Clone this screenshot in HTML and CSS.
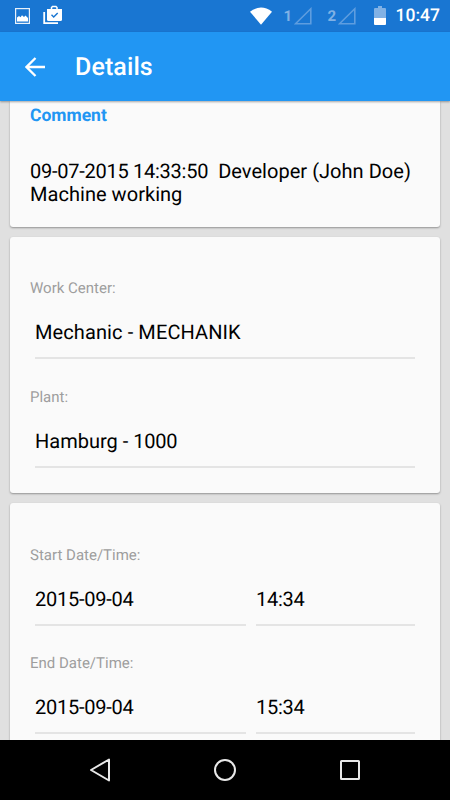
FILE: index.html
```html
<!DOCTYPE html>
<html lang="en">
<head>
<meta charset="utf-8">
<title>Details</title>
<link rel="stylesheet" href="styles.css">
</head>
<body>
<div class="status">
  <svg class="status-left" width="50" height="31" viewBox="0 0 50 31">
    <rect x="0.6" y="8.600" width="13.800" height="14.800" fill="none" stroke="#e8f1fa" stroke-width="1.200"/>
    <path d="M2 21.500V17.500l2-1.500 1.500 1.200 1.500-2 2 1.800 1.500-1.500 2.500 2.500v3.500z" fill="#fff"/>
    <path d="M29.200 12v11.200H43" fill="none" stroke="#fff" stroke-width="1.800"/>
    <path d="M36.500 9V7.500l1-.9h3.500l1 .9V9" fill="none" stroke="#fff" stroke-width="1.500"/>
    <path d="M32 9h15v10.500q0 1.500-1.500 1.500h-12q-1.500 0-1.500-1.500z" fill="#fff"/>
    <path d="M36.500 14.700l2.200 2.200 4-4" fill="none" stroke="#1976d2" stroke-width="1.400"/>
  </svg>
  <div class="status-right">
    <svg class="wifi" width="22" height="18" viewBox="0 0 22 18"><path d="M0 4.800Q11-3.600 22 4.800L11 17.700z" fill="#fff"/></svg>
    <span class="sim">1</span>
    <svg class="signal" width="18" height="18" viewBox="0 0 18 18"><path d="M1.500 16.800L16.800 1.800v15z"/></svg>
    <span class="sim sim-two">2</span>
    <svg class="signal" width="18" height="18" viewBox="0 0 18 18"><path d="M1.500 16.800L16.800 1.800v15z"/></svg>
    <svg class="battery" width="12" height="19" viewBox="0 0 12 19"><path d="M4 0h4v2h3q1 0 1 1v9H0V3q0-1 1-1h3z" fill="#80b1e5"/><path d="M0 12h12v6q0 1-1 1H1q-1 0-1-1z" fill="#fff"/></svg>
    <span class="clock">10:47</span>
  </div>
</div>
<header class="bar">
  <svg class="back" width="20" height="20" viewBox="0 0 20 20"><path d="M20 10H2M10.500 1L1.500 10l9 9" fill="none" stroke="#fff" stroke-width="2.300"/></svg>
  <h1>Details</h1>
</header>
<main>
  <section class="card comment">
    <h2>Comment</h2>
    <p><span class="digits">09-07-2015 14:33:50</span>&nbsp; Developer (John Doe)<br>Machine working</p>
  </section>
  <section class="card">
    <div class="label">Work Center:</div>
    <div class="fields"><div class="field wide">Mechanic - MECHANIK</div></div>
    <div class="label">Plant:</div>
    <div class="fields"><div class="field">Hamburg - <span class="digits">1000</span></div></div>
  </section>
  <section class="card schedule">
    <div class="label">Start Date/Time:</div>
    <div class="fields two"><div class="field digits">2015-09-04</div><div class="field digits">14:34</div></div>
    <div class="label">End Date/Time:</div>
    <div class="fields two"><div class="field digits">2015-09-04</div><div class="field digits">15:34</div></div>
  </section>
</main>
<nav>
  <svg width="24" height="26" viewBox="0 0 24 26"><path d="M3 13L21 2.500v21z"/></svg>
  <svg width="24" height="26" viewBox="0 0 24 26"><circle cx="12" cy="13" r="10"/></svg>
  <svg width="24" height="26" viewBox="0 0 24 26"><rect x="3" y="4" width="18" height="18" rx="0.500"/></svg>
</nav>
</body>
</html>
```
FILE: styles.css
```css
* {
  box-sizing: border-box;
}

body {
  margin: 0;
  width: 450px;
  height: 800px;
  overflow: hidden;
  display: flex;
  flex-direction: column;
  background: #e0e0e0;
  color: #000;
  font-family: Roboto, sans-serif;
  font-size: 20px;
  line-height: 23.4px;
  text-rendering: geometricPrecision;
}

svg {
  display: block;
  flex: none;
}

.status {
  height: 32px;
  flex: none;
  display: flex;
  justify-content: space-between;
  background: #1976d2;
  padding: 0 10px 0 15px;
}

.status-right {
  display: flex;
  align-items: center;
  height: 31px;
}

.sim {
  color: #80b1e5;
  font-size: 15px;
  font-weight: 700;
  width: 9px;
  margin: 3px 1px 0 12px;
}

.sim-two {
  margin-left: 16px;
}

.signal {
  margin-top: 1px;
}

.signal path {
  fill: none;
  stroke: #5e9ddf;
  stroke-width: 1.600px;
}

.battery {
  margin: 0 10px 0 18px;
}

.clock {
  color: #fff;
  font-size: 17.500px;
  font-weight: 500;
  padding-top: 3px;
}

.bar {
  height: 69px;
  flex: none;
  display: flex;
  align-items: center;
  padding: 1px 25px 0;
  gap: 30px;
  background: #2196f3;
  box-shadow: 0 1px 2px rgba(0, 0, 0, 0.35);
  position: relative;
  z-index: 1;
}

.bar h1 {
  margin: 0;
  padding-top: 2px;
  color: #fff;
  font-size: 25px;
  line-height: 30px;
  font-weight: 500;
  letter-spacing: 0.1px;
}

main {
  flex: 1;
  min-height: 0;
  overflow: hidden;
  display: flex;
  flex-direction: column;
  gap: 10px;
  padding: 0 10px;
}

.card {
  height: 256px;
  flex: none;
  padding: 42px 20px 0;
  background: #fafafa;
  border-radius: 3px;
  box-shadow: 0 1px 2px rgba(0, 0, 0, 0.35);
}

.comment {
  height: 126px;
  padding-top: 5px;
  border-radius: 0 0 3px 3px;
}

.comment h2 {
  margin: 0;
  color: #2196f3;
  font-size: 17.500px;
  line-height: 21px;
  font-weight: 700;
}

.comment p {
  margin: 33px 0 0;
  letter-spacing: 0.04px;
}

.label {
  color: #9e9e9e;
  font-size: 15px;
  line-height: 18px;
}

.fields {
  display: grid;
  grid-template-columns: 1fr;
  gap: 10px;
  padding: 0 5px;
  margin: 18px 0 28.500px;
}

.schedule {
  padding-top: 43px;
}

.schedule .fields {
  margin-bottom: 27.500px;
}

.two {
  grid-template-columns: 211px 1fr;
}

.field {
  height: 44px;
  padding-top: 6px;
  border-bottom: 2px solid #e4e4e4;
}

.wide {
  letter-spacing: 0.1px;
}

.comment .digits,
.digits {
  letter-spacing: -0.260px;
}

nav {
  height: 60px;
  flex: none;
  display: flex;
  align-items: center;
  justify-content: space-between;
  padding: 0 88px;
  background: #000;
}

nav path,
nav circle,
nav rect {
  fill: none;
  stroke: #e8e8e8;
  stroke-width: 2px;
  stroke-linejoin: round;
}
```
